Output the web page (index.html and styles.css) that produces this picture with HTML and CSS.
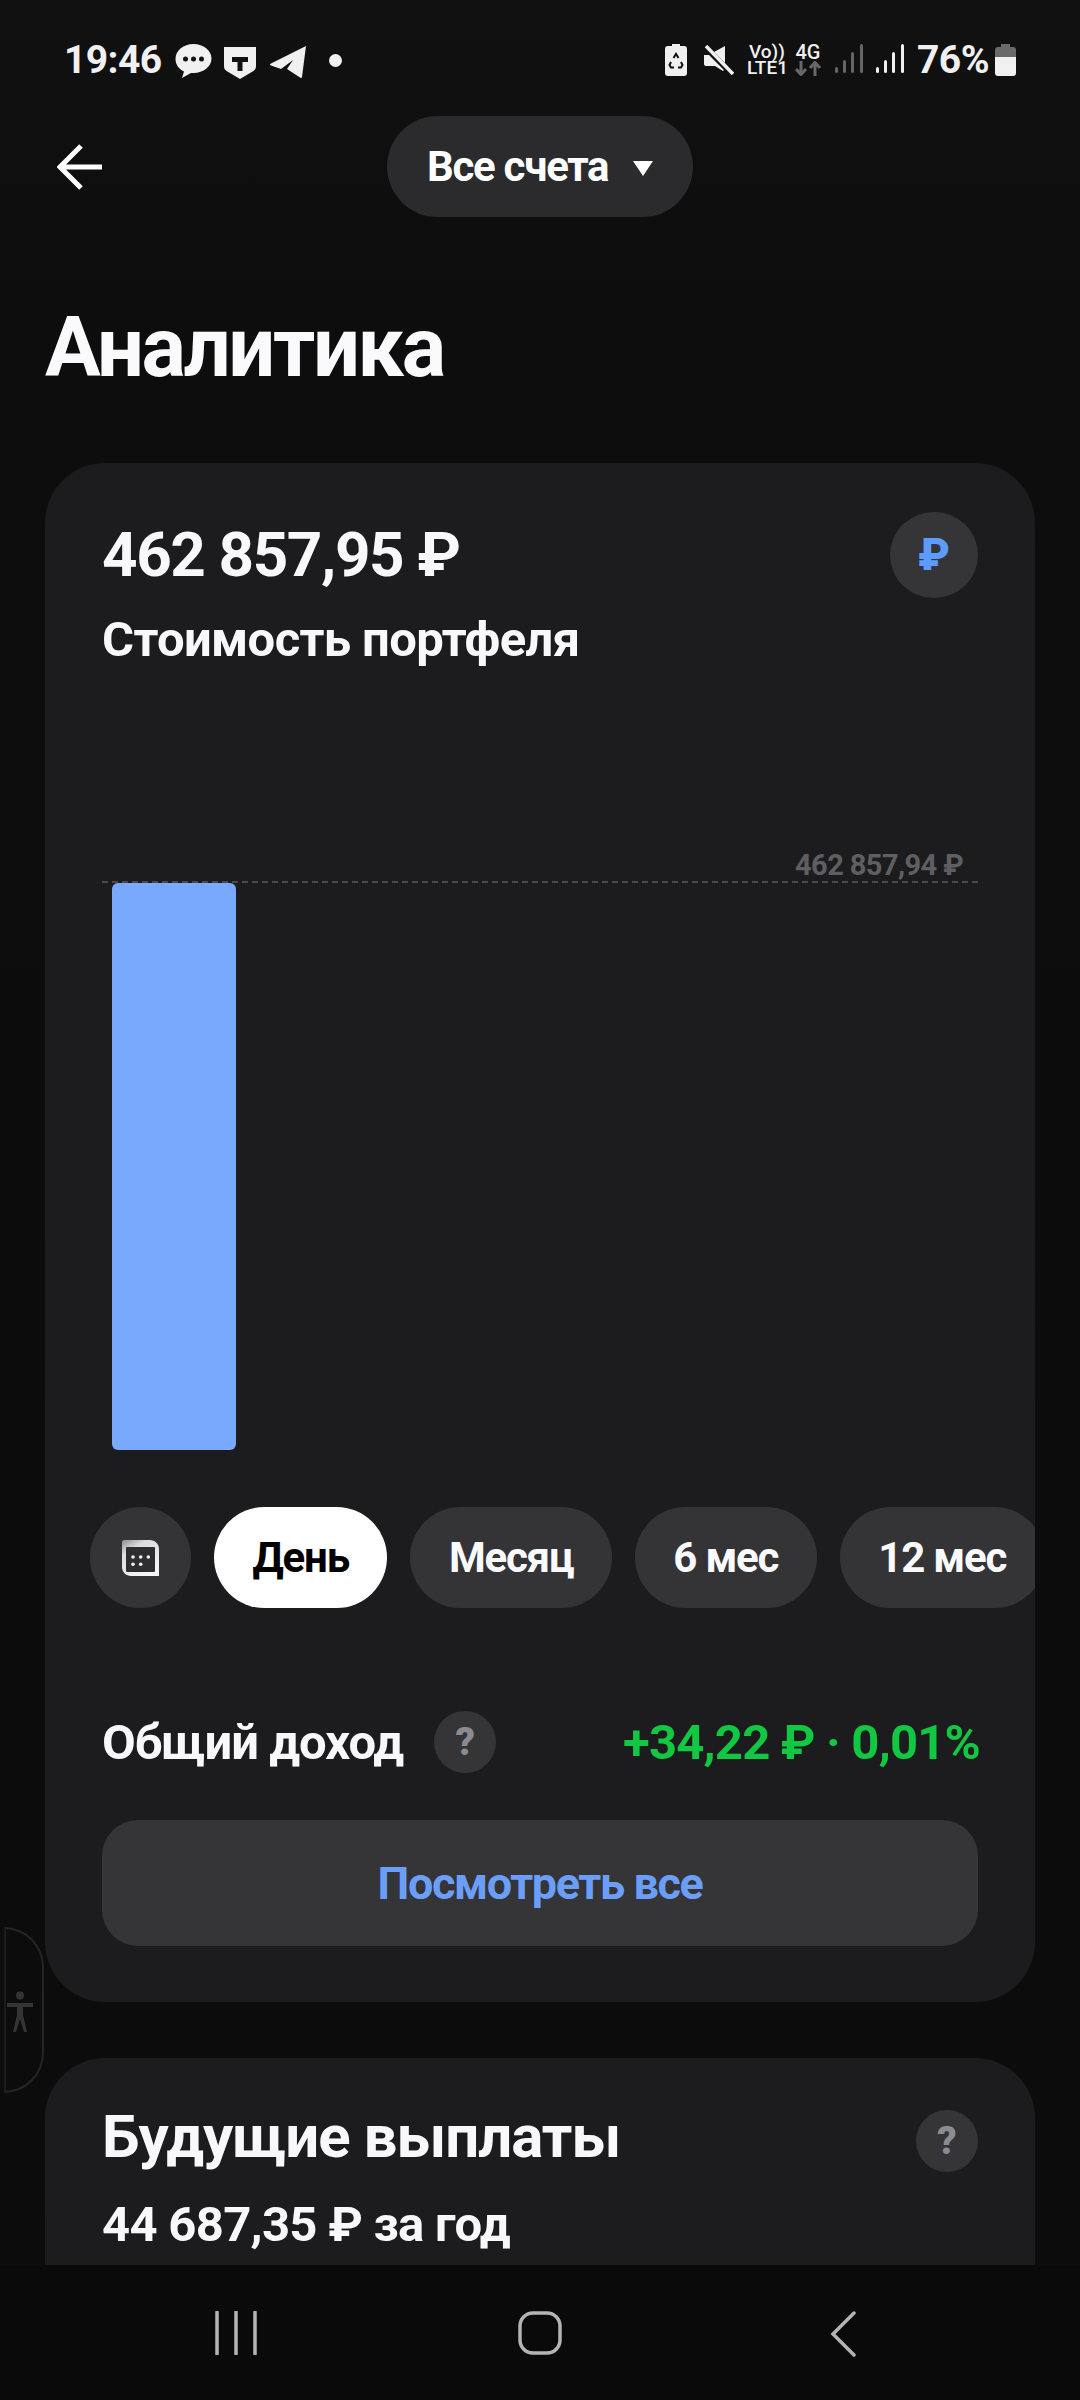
FILE: index.html

```html
<!DOCTYPE html>
<html lang="ru">
<head>
    <meta charset="UTF-8">
    <meta name="viewport" content="width=device-width, initial-scale=1.0">
    <title>Аналитика</title>
    <link rel="stylesheet" href="styles.css">
</head>
<body>

    <div class="screen">
        <div class="status-bar">
            <div class="status-left">
                <span class="status-time">19:46</span>
                <svg class="ic-chat" viewBox="0 0 36 36"><path d="M18 1C8 1 0 7.500 0 16c0 5.500 3.400 10 8.500 12.500L6.500 35l9-5.100c.8.100 1.700.1 2.500.1 10 0 18-6.500 18-14.500S28 1 18 1z" fill="#f0f0f0"/><circle cx="10" cy="16" r="2.500" fill="#111"/><circle cx="18" cy="16" r="2.500" fill="#111"/><circle cx="26" cy="16" r="2.500" fill="#111"/></svg>
                <svg class="ic-shield" viewBox="0 0 32 32"><path d="M0 0h32v19c0 3-1 4-3 5.200L16 32 3 24.200C1 23 0 22 0 19z" fill="#f0f0f0"/><path d="M8 10h16v5h-5.500v9h-5v-9H8z" fill="#111"/></svg>
                <svg class="ic-telegram" viewBox="0 0 36 32"><path d="M36 0L32 31c-.2 1-1 1.200-2 .6L17 23l6-9-12 9-10-3.500c-1.300-.6-1.300-1.500 0-2.100z" fill="#f0f0f0"/></svg>
                <span class="status-dot"></span>
            </div>
            <div class="status-right">
                <svg class="ic-saver" viewBox="0 0 22 32"><path d="M7 0h8v2h4a3 3 0 0 1 3 3v24a3 3 0 0 1-3 3H3a3 3 0 0 1-3-3V5a3 3 0 0 1 3-3h4z" fill="#f0f0f0"/><path d="M8.500 14L11 10l2.500 4M16 18l1.500 3-1.500 2.500h-3M9 23.500H6L4.500 21 6 18" fill="none" stroke="#111" stroke-width="2"/></svg>
                <svg class="ic-mute" viewBox="0 0 30 30"><path d="M21 1v17L10 7z M0 10h5l15 15-1 1-8-5H2a2 2 0 0 1-2-2z" fill="#f0f0f0"/><path d="M2 1l27 28" stroke="#f0f0f0" stroke-width="3.500"/></svg>
                <div class="net-vo">Vo))<br>LTE1</div>
                <div class="net-4g">
                    <span>4G</span>
                    <svg viewBox="0 0 26 15"><path d="M6 0v13M1 8l5 5.500L11 8M20 15V2M15 7l5-5.500L25 7" fill="none" stroke="#686868" stroke-width="3"/></svg>
                </div>
                <svg class="ic-signal" viewBox="0 0 28 30"><g fill="#666"><rect x="0" y="23" width="3" height="6" rx="1.500"/><rect x="8" y="16" width="3" height="13" rx="1.500"/><rect x="16" y="8" width="3" height="21" rx="1.500"/><rect x="25" y="0" width="3" height="29" rx="1.500"/></g></svg>
                <svg class="ic-signal" viewBox="0 0 28 30"><g fill="#f0f0f0"><rect x="0" y="23" width="3" height="6" rx="1.500"/><rect x="8" y="16" width="3" height="13" rx="1.500"/><rect x="16" y="8" width="3" height="21" rx="1.500"/><rect x="25" y="0" width="3" height="29" rx="1.500"/></g></svg>
                <span class="status-pct">76%</span>
                <svg class="ic-battery" viewBox="0 0 21 32"><path d="M6 0h9v3h3a3 3 0 0 1 3 3v7H0V6a3 3 0 0 1 3-3h3z" fill="#6a6a6a"/><path d="M0 13h21v16a3 3 0 0 1-3 3H3a3 3 0 0 1-3-3z" fill="#f0f0f0"/></svg>
            </div>
        </div>

        <div class="header">
            <svg class="back-arrow" viewBox="0 0 46 46"><path d="M45 23H4M24 2L3 23l21 21" fill="none" stroke="#fff" stroke-width="5"/></svg>
            <div class="account-pill">
                <span>Все счета</span>
                <span class="caret"></span>
            </div>
        </div>

        <div class="content">
            <h1 class="page-title">Аналитика</h1>

            <div class="card card-portfolio">
                <div class="card-top">
                    <div class="portfolio-value">462 857,95 ₽</div>
                    <div class="round-btn currency-btn">₽</div>
                </div>
                <div class="portfolio-label">Стоимость портфеля</div>

                <div class="chart">
                    <div class="chart-max">462 857,94 ₽</div>
                    <div class="chart-area">
                        <div class="chart-bar"></div>
                    </div>
                </div>

                <div class="periods">
                    <div class="chip chip-icon">
                        <svg viewBox="0 0 37 36"><defs><linearGradient id="calFrame" x1="0" y1="0" x2="0.6" y2="1"><stop offset="0" stop-color="#8c8c8c"/><stop offset="0.3" stop-color="#dcdcdc"/><stop offset="1" stop-color="#f5f5f5"/></linearGradient></defs><path d="M2 0h26c5 0 9 4 9 9v27H9c-5 0-9-4-9-9V2c0-1 1-2 2-2z" fill="url(#calFrame)"/><rect x="4" y="7" width="29" height="25" rx="1" fill="#2e2e30"/><g fill="#f2f2f2"><circle cx="11" cy="17" r="1.800"/><circle cx="18.700" cy="17" r="1.800"/><circle cx="26.300" cy="17" r="1.800"/><circle cx="11" cy="24.300" r="1.800"/><circle cx="18.700" cy="24.300" r="1.800"/></g></svg>
                    </div>
                    <div class="chip chip-active">День</div>
                    <div class="chip">Месяц</div>
                    <div class="chip">6 мес</div>
                    <div class="chip">12 мес</div>
                </div>

                <div class="income-row">
                    <span class="income-label">Общий доход</span>
                    <span class="round-btn help-btn">?</span>
                    <span class="income-value">+34,22 ₽ · 0,01%</span>
                </div>

                <div class="see-all">Посмотреть все</div>
            </div>

            <div class="card card-payouts">
                <div class="card-top">
                    <div class="payouts-title">Будущие выплаты</div>
                    <span class="round-btn help-btn">?</span>
                </div>
                <div class="payouts-sum">44 687,35 ₽ за год</div>
            </div>
        </div>

        <div class="nav-bar">
            <svg class="nav-recent" viewBox="0 0 44 44"><path d="M2 1v42M21 1v42M40 1v42" stroke="#b4b4b4" stroke-width="3.500" stroke-linecap="round"/></svg>
            <svg class="nav-home" viewBox="0 0 44 44"><rect x="2" y="2" width="40" height="40" rx="13" fill="none" stroke="#b4b4b4" stroke-width="3.500"/></svg>
            <svg class="nav-back" viewBox="0 0 26 46"><path d="M24 2L3 23l21 21" fill="none" stroke="#b4b4b4" stroke-width="3.500" stroke-linecap="round"/></svg>
        </div>

        <div class="a11y-tab">
            <svg viewBox="0 0 28 42"><circle cx="14" cy="4.500" r="4" fill="#343435"/><path d="M1 12h26v4H17v8l4 17h-3l-4-13-4 13H7l4-17v-8H1z" fill="#343435"/></svg>
        </div>
    </div>

</body>
</html>
```

FILE: styles.css

```css
* {
    box-sizing: border-box;
}
html, body {
    margin: 0;
    padding: 0;
}
body {
    font-family: Roboto, "Noto Sans", sans-serif;
    background: #0e0e0f;
    color: #f8f8fa;
}
.screen {
    position: relative;
    width: 1080px;
    height: 2400px;
    overflow: hidden;
    display: flex;
    flex-direction: column;
    background: linear-gradient(#111112 0, #0d0d0e 300px, #0c0c0d 100%);
}

/* status bar */
.status-bar {
    height: 116px;
    flex-shrink: 0;
    display: flex;
    justify-content: space-between;
    padding: 43px 64px 0 64px;
    color: #f0f0f0;
}
.status-left, .status-right {
    display: flex;
    align-items: flex-start;
}
.status-time {
    font-size: 39px;
    font-weight: 700;
    letter-spacing: -0.6px;
    line-height: 35px;
    margin-right: 13px;
}
.ic-chat {
    width: 37px;
    height: 36px;
    margin-right: 12px;
}
.ic-shield {
    width: 32px;
    height: 32px;
    margin-top: 4px;
    margin-right: 14px;
}
.ic-telegram {
    width: 36px;
    height: 32px;
    margin-top: 3px;
    margin-right: 23px;
}
.status-dot {
    width: 13px;
    height: 13px;
    margin-top: 11px;
    border-radius: 50%;
    background: #f0f0f0;
}
.status-right {
    padding-top: 1px;
}
.ic-saver {
    width: 22px;
    height: 32px;
    margin-right: 17px;
}
.ic-mute {
    width: 30px;
    height: 30px;
    margin-top: 1px;
    margin-right: 13px;
}
.net-vo {
    width: 40px;
    text-align: center;
    font-size: 19px;
    font-weight: 500;
    line-height: 16px;
    margin-right: 8px;
}
.net-4g {
    display: flex;
    flex-direction: column;
    align-items: center;
    width: 26px;
    font-size: 20px;
    font-weight: 500;
    line-height: 17px;
    margin-right: 14px;
}
.net-4g svg {
    width: 26px;
    height: 15px;
}
.ic-signal {
    width: 28px;
    height: 30px;
    margin-right: 13px;
}
.status-pct {
    font-size: 39px;
    font-weight: 700;
    letter-spacing: -0.5px;
    line-height: 33px;
    margin-right: 6px;
}
.ic-battery {
    width: 21px;
    height: 32px;
}

/* header */
.header {
    position: relative;
    height: 101px;
    flex-shrink: 0;
    display: flex;
    justify-content: center;
    align-items: center;
}
.back-arrow {
    position: absolute;
    left: 57px;
    top: 28px;
    width: 46px;
    height: 46px;
}
.account-pill {
    width: 306px;
    height: 101px;
    border-radius: 51px;
    background: #2b2b2d;
    display: flex;
    align-items: center;
    padding-left: 40px;
    font-size: 42px;
    font-weight: 700;
    letter-spacing: -1.3px;
    color: #fff;
}
.caret {
    margin-left: 25px;
    margin-top: 3px;
    width: 0;
    height: 0;
    border-left: 10px solid transparent;
    border-right: 10px solid transparent;
    border-top: 15px solid #fff;
}

/* content */
.content {
    flex: 1;
    min-height: 0;
    overflow: hidden;
    padding: 0 45px;
}
.page-title {
    margin: 0;
    padding-top: 85px;
    height: 246px;
    font-size: 83px;
    line-height: 92px;
    font-weight: 700;
    letter-spacing: -2.4px;
    color: #fafafc;
}
.card {
    background: #1c1c1e;
    border-radius: 60px;
    overflow: hidden;
}
.card-portfolio {
    height: 1539px;
    padding: 49px 57px 0;
}
.card-top {
    display: flex;
    justify-content: space-between;
    align-items: center;
}
.portfolio-value {
    font-size: 62px;
    font-weight: 700;
    letter-spacing: -1.4px;
    line-height: 86px;
}
.round-btn {
    display: flex;
    align-items: center;
    justify-content: center;
    border-radius: 50%;
    background: #353537;
    flex-shrink: 0;
}
.currency-btn {
    width: 88px;
    height: 86px;
    font-size: 44px;
    font-weight: 900;
    color: #5e9bff;
}
.help-btn {
    width: 62px;
    height: 62px;
    font-size: 38px;
    font-weight: 900;
    color: #8b8b90;
}
.portfolio-label {
    font-size: 49px;
    font-weight: 700;
    letter-spacing: -0.65px;
    line-height: 56px;
    margin-top: 14px;
}

/* chart */
.chart {
    margin-top: 180px;
}
.chart-max {
    text-align: right;
    padding-right: 15px;
    font-size: 29px;
    font-weight: 700;
    letter-spacing: -0.6px;
    line-height: 34px;
    color: #5f5f62;
}
.chart-area {
    margin-top: -1px;
    border-top: 2px dashed #4a4a4d;
    padding: 0 0 0 10px;
}
.chart-bar {
    width: 124px;
    height: 567px;
    background: #78a9fc;
    border-radius: 6px;
}

/* periods */
.periods {
    display: flex;
    gap: 23px;
    margin: 57px -57px 0 -12px;
}
.chip {
    height: 101px;
    flex-shrink: 0;
    padding: 0 38.5px;
    border-radius: 51px;
    background: #343436;
    display: flex;
    align-items: center;
    font-size: 42px;
    font-weight: 700;
    letter-spacing: -1.2px;
    color: #fafafc;
}
.chip-icon {
    width: 101px;
    padding: 0;
    justify-content: center;
}
.chip-icon svg {
    width: 37px;
    height: 36px;
}
.chip-active {
    background: #fff;
    color: #000;
}

/* income */
.income-row {
    display: flex;
    align-items: center;
    margin-top: 103px;
}
.income-label {
    font-size: 49px;
    font-weight: 700;
    letter-spacing: -1px;
    margin-right: 31px;
}
.income-value {
    margin-left: auto;
    margin-right: -2px;
    font-size: 49px;
    font-weight: 700;
    letter-spacing: -0.8px;
    color: #12c742;
}
.see-all {
    margin-top: 47px;
    height: 126px;
    border-radius: 36px;
    background: #353537;
    display: flex;
    align-items: center;
    justify-content: center;
    font-size: 45px;
    font-weight: 700;
    letter-spacing: -1.4px;
    color: #6a9ef8;
}

/* second card */
.card-payouts {
    margin-top: 56px;
    height: 400px;
    padding: 43px 57px 0;
}
.payouts-title {
    font-size: 60px;
    font-weight: 700;
    letter-spacing: -1px;
    margin-bottom: 8px;
}
.payouts-sum {
    margin-top: 16px;
    font-size: 49px;
    font-weight: 700;
    letter-spacing: -0.7px;
}

/* nav bar */
.nav-bar {
    position: absolute;
    left: 0;
    right: 0;
    bottom: 0;
    height: 135px;
    background: #0a0a0a;
    display: flex;
    align-items: flex-start;
    padding: 46px 0 0 215px;
}
.nav-recent {
    width: 44px;
    height: 44px;
    margin-right: 259px;
}
.nav-home {
    width: 44px;
    height: 44px;
    margin-right: 268px;
}
.nav-back {
    width: 26px;
    height: 46px;
}

/* accessibility tab on the left edge */
.a11y-tab {
    position: absolute;
    left: 4px;
    top: 1927px;
    width: 40px;
    height: 166px;
    border: 2px solid #252526;
    border-left: 2px solid #1c1c1d;
    border-radius: 0 40px 40px 0;
    display: flex;
    align-items: center;
    justify-content: center;
}
.a11y-tab svg {
    width: 28px;
    height: 42px;
    margin-left: -8px;
    margin-top: 4px;
}
```
